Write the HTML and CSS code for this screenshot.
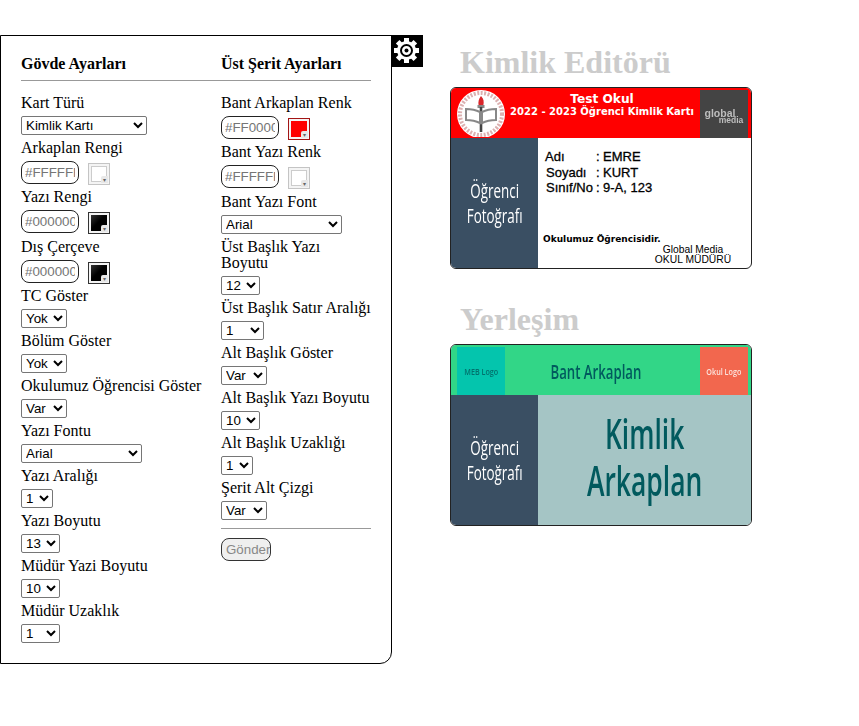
FILE: index.html
```html
<!DOCTYPE html>
<html lang="tr">
  <head>
    <meta charset="UTF-8" />
    <meta name="viewport" content="width=device-width, initial-scale=1.0" />
    <title>Kimlik Editörü</title>
    <link rel="stylesheet" href="styles.css">
  </head>
  <body>
    <div class="page">
      <form class="panel">
        <a class="gear">
          <svg width="32" height="32" viewBox="0 0 32 32">
            <g transform="translate(-.5 -.5)">
              <g fill="#fff">
                <circle cx="16" cy="16" r="9.500" />
                <rect x="13.500" y="3.500" width="5" height="25" />
                <rect x="13.500" y="3.500" width="5" height="25" transform="rotate(45 16 16)" />
                <rect x="13.500" y="3.500" width="5" height="25" transform="rotate(90 16 16)" />
                <rect x="13.500" y="3.500" width="5" height="25" transform="rotate(135 16 16)" />
              </g>
              <circle cx="16" cy="16" r="5.500" fill="none" stroke="#000" stroke-width="2" />
              <circle cx="16" cy="16" r="2" fill="#000" />
            </g>
          </svg>
        </a>
        <div class="col col-left">
          <h4>Gövde Ayarları</h4>
          <hr />
          <label>Kart Türü</label>
          <div class="row"><select class="w126"><option>Kimlik Kartı</option></select></div>
          <label>Arkaplan Rengi</label>
          <div class="row color"><input placeholder="#FFFFFF" /><span class="swatch white"></span></div>
          <label>Yazı Rengi</label>
          <div class="row color"><input placeholder="#000000" /><span class="swatch black"></span></div>
          <label>Dış Çerçeve</label>
          <div class="row color"><input placeholder="#000000" /><span class="swatch black"></span></div>
          <label>TC Göster</label>
          <div class="row"><select class="w46"><option>Yok</option></select></div>
          <label>Bölüm Göster</label>
          <div class="row"><select class="w46"><option>Yok</option></select></div>
          <label>Okulumuz Öğrencisi Göster</label>
          <div class="row"><select class="w46"><option>Var</option></select></div>
          <label>Yazı Fontu</label>
          <div class="row"><select class="w121"><option>Arial</option></select></div>
          <label>Yazı Aralığı</label>
          <div class="row"><select class="w32"><option>1</option></select></div>
          <label>Yazı Boyutu</label>
          <div class="row"><select class="w39"><option>13</option></select></div>
          <label>Müdür Yazi Boyutu</label>
          <div class="row"><select class="w39"><option>10</option></select></div>
          <label>Müdür Uzaklık</label>
          <div class="row"><select class="w39"><option>1</option></select></div>
        </div>
        <div class="col col-right">
          <h4>Üst Şerit Ayarları</h4>
          <hr />
          <label>Bant Arkaplan Renk</label>
          <div class="row color"><input placeholder="#FF0000" /><span class="swatch red"></span></div>
          <label>Bant Yazı Renk</label>
          <div class="row color"><input placeholder="#FFFFFF" /><span class="swatch white"></span></div>
          <label>Bant Yazı Font</label>
          <div class="row"><select class="w121"><option>Arial</option></select></div>
          <label>Üst Başlık Yazı Boyutu</label>
          <div class="row"><select class="w39"><option>12</option></select></div>
          <label>Üst Başlık Satır Aralığı</label>
          <div class="row"><select class="w43"><option>1</option></select></div>
          <label>Alt Başlık Göster</label>
          <div class="row"><select class="w46"><option>Var</option></select></div>
          <label>Alt Başlık Yazı Boyutu</label>
          <div class="row"><select class="w39"><option>10</option></select></div>
          <label>Alt Başlık Uzaklığı</label>
          <div class="row"><select class="w32"><option>1</option></select></div>
          <label>Şerit Alt Çizgi</label>
          <div class="row"><select class="w46"><option>Var</option></select></div>
          <hr class="end" />
          <button type="button" disabled>Gönder</button>
        </div>
      </form>

      <div class="preview">
        <h1>Kimlik Editörü</h1>
        <div class="card">
          <div class="band band-red">
            <div class="logo-box">
              <svg class="meb" width="48" height="48" viewBox="0 0 48 48">
                <circle cx="24" cy="25" r="24" fill="#fff" />
                <circle cx="24" cy="25" r="21" fill="none" stroke="#dcb0b0" stroke-width="4" stroke-dasharray="2 1.500" />
                <circle cx="24" cy="25" r="18" fill="#fff" />
                <path d="M24 7c3 3 3 6 2.400 9h-4.800c-.6-3 0-6 2.400-9z" fill="#d9262a" />
                <rect x="20.500" y="16" width="7" height="3" fill="#888" />
                <rect x="22.700" y="18" width="2.600" height="25" fill="#444" />
                <path d="M9 20v11c5 0 10 1 14 3v-11c-4-2-9-3-14-3zM39 20v11c-5 0-10 1-14 3v-11c4-2 9-3 14-3z" fill="none" stroke="#888" stroke-width="2" />
              </svg>
            </div>
            <div class="band-title">
              <b class="school">Test Okul</b>
              <b class="year">2022 - 2023 Öğrenci Kimlik Kartı</b>
            </div>
            <div class="logo-box global">
              <span class="g-top">global</span>
              <span class="g-bottom">media</span>
            </div>
          </div>
          <div class="card-body">
            <div class="photo"><span>Öğrenci<br />Fotoğrafı</span></div>
            <div class="info">
              <dl>
                <dt>Adı</dt><dd>:</dd><dd>EMRE</dd>
                <dt class="nudge">Soyadı</dt><dd>:</dd><dd>KURT</dd>
                <dt class="nudge">Sınıf/No</dt><dd>:</dd><dd>9-A, 123</dd>
              </dl>
              <div class="proud">Okulumuz Öğrencisidir.</div>
              <div class="sign">Global Media<br />OKUL MÜDÜRÜ</div>
            </div>
          </div>
        </div>

        <h1 class="second">Yerleşim</h1>
        <div class="card">
          <div class="band band-green">
            <div class="logo-box teal"><span class="cond small dark">MEB Logo</span></div>
            <div class="band-title"><span class="cond band-name">Bant Arkaplan</span></div>
            <div class="logo-box orange"><span class="cond small">Okul Logo</span></div>
          </div>
          <div class="card-body">
            <div class="photo"><span>Öğrenci<br />Fotoğrafı</span></div>
            <div class="bg-label"><span class="cond">Kimlik<br />Arkaplan</span></div>
          </div>
        </div>
      </div>
    </div>
  </body>
</html>
```

FILE: styles.css
```css
* {
  box-sizing: border-box;
}
body {
  margin: 0;
  background: #fff;
  color: #000;
  font-family: "Liberation Serif", serif;
  font-size: 16px;
}
.page {
  display: flex;
  align-items: flex-start;
  height: 726px;
}

/* settings panel */
.panel {
  position: relative;
  display: flex;
  width: 392px;
  height: 629px;
  margin-top: 35px;
  padding: 19px 0 0 20px;
  border: 1px solid #000;
  border-radius: 0 0 12px 0;
}
.gear {
  position: absolute;
  top: -1px;
  left: 100%;
  width: 32px;
  height: 32px;
  background: #000;
}
.gear svg {
  display: block;
}
.col-left {
  width: 200px;
}
.col-right {
  width: 150px;
}
h4 {
  margin: 0;
  font-size: 16px;
  line-height: 18px;
}
hr {
  height: 1px;
  margin: 7px 0 13px;
  border: 0;
  background: #999;
}
hr.end {
  margin: 4px 0 9px;
}
label {
  display: block;
  line-height: 16px;
  padding: 1px 0;
}
.row {
  height: 27px;
  padding-top: 4px;
}
.row.color {
  display: flex;
  align-items: flex-start;
  gap: 9px;
  height: 31.4px;
}
select {
  display: block;
  height: 19px;
  padding: 0;
  border: 1px solid #767676;
  border-radius: 2px;
  background: #fff;
  font-family: "Liberation Sans", sans-serif;
  font-size: 13.333px;
}
.w32 { width: 32px; }
.w39 { width: 39px; }
.w43 { width: 43px; }
.w46 { width: 46px; }
.w121 { width: 121px; }
.w126 { width: 126px; }
input {
  width: 58px;
  height: 23px;
  padding: 1px 3px;
  border: 1px solid #222;
  border-radius: 8px;
  font-family: "Liberation Sans", sans-serif;
  font-size: 13.333px;
}
input::placeholder {
  color: #757575;
}

/* colour picker buttons */
.swatch {
  position: relative;
  width: 22px;
  height: 22px;
  margin-top: 2px;
  border: 1px solid #333;
  background: #f4f4f4;
}
.swatch::before {
  content: "";
  position: absolute;
  inset: 2px;
}
.swatch::after {
  content: "▾";
  position: absolute;
  right: 1px;
  bottom: 1px;
  width: 7px;
  height: 7px;
  border-radius: 2px 0 0 0;
  background: #e8e8e8;
  color: #666;
  font-family: "DejaVu Sans", sans-serif;
  font-size: 6px;
  line-height: 7px;
  text-align: center;
}
.swatch.white {
  border-color: #c4c4c4;
}
.swatch.white::before {
  background: #fff;
  border: 1px solid #ccc;
}
.swatch.black::before {
  background: linear-gradient(135deg, #333, #000 45%);
}
.swatch.red {
  border-color: #a31515;
}
.swatch.red::before {
  background: #f00;
}
button {
  display: block;
  width: 50px;
  height: 23px;
  padding: 0 0 0 4px;
  border: 1px solid #333;
  border-radius: 8px;
  background: #efefef;
  color: #888;
  font-family: "Liberation Sans", sans-serif;
  font-size: 13.333px;
  overflow: hidden;
  text-align: left;
  white-space: nowrap;
}

/* right side */
.preview {
  width: 302px;
  margin-left: 58px;
  padding-top: 45px;
}
h1 {
  margin: 0 0 8px 10px;
  color: #ccc;
  font-size: 32px;
  line-height: 34px;
}
h1.second {
  margin: 33px 0 8px 10px;
}
.card {
  display: flex;
  flex-direction: column;
  overflow: hidden;
  width: 302px;
  height: 182px;
  border: 1px solid #222;
  border-radius: 6px;
}
.band {
  display: flex;
  flex: none;
  height: 50px;
  padding: 0 3px 0 6px;
}
.band-red {
  background: #f00;
}
.band-green {
  background: #32d687;
  padding-top: 2px;
}
.logo-box {
  display: flex;
  align-items: center;
  justify-content: center;
  flex: none;
  width: 48px;
}
.meb {
  filter: blur(.4px);
}
.band-title {
  display: flex;
  flex: 1;
  flex-direction: column;
  align-items: center;
  justify-content: center;
  color: #fff;
}
.band-red .band-title {
  justify-content: flex-start;
  padding-top: 4px;
  margin-left: -1px;
}
.school {
  font-family: "DejaVu Sans", sans-serif;
  font-size: 12.2px;
  line-height: 14px;
}
.year {
  font-family: "DejaVu Sans", sans-serif;
  font-size: 10px;
  line-height: 11px;
  white-space: nowrap;
}
.global {
  flex-direction: column;
  align-self: flex-end;
  height: 48px;
  padding-top: 4px;
  background: #444;
  color: #bdbdbd;
  font-family: "Liberation Sans", sans-serif;
  font-weight: bold;
}
.g-top {
  margin-right: 8px;
  font-size: 10.5px;
  line-height: 8px;
  filter: blur(.6px);
}
.g-bottom {
  margin-left: 14px;
  font-size: 8.5px;
  line-height: 7px;
  filter: blur(.6px);
}
.teal {
  background: #04c5ad;
}
.orange {
  background: #f2674e;
}
.card-body {
  display: flex;
  flex: 1;
}
.photo {
  display: flex;
  flex: none;
  align-items: center;
  justify-content: center;
  width: 87px;
  background: #3a4f63;
  color: #fff;
  font-family: "Open Sans", sans-serif;
  font-size: 20px;
  line-height: 25px;
  text-align: center;
}
.photo span {
  transform: scaleX(.67);
  white-space: nowrap;
}
.info {
  flex: 1;
  padding: 11px 0 0 5px;
  font-family: "Liberation Sans", sans-serif;
  color: #000;
}
dl {
  display: grid;
  grid-template-columns: 51px 7px auto;
  grid-auto-rows: 15.5px;
  margin: 0 0 0 2px;
  font-size: 13px;
  line-height: 16px;
  -webkit-text-stroke: .3px #000;
}
dd {
  margin: 0;
}
dt.nudge {
  margin-left: 1px;
}
.proud {
  margin-top: 37px;
  font-family: "DejaVu Sans", sans-serif;
  font-size: 9px;
  font-weight: bold;
  line-height: 12px;
  white-space: nowrap;
}
.sign {
  margin-top: 0;
  padding-left: 92px;
  font-size: 10.3px;
  line-height: 10px;
  text-align: center;
  white-space: nowrap;
}

/* futura look-alike text on the layout card */
.cond {
  display: inline-block;
  font-family: "Open Sans", sans-serif;
  color: #015a5e;
  text-align: center;
  white-space: nowrap;
}
.small {
  transform: scaleX(.8);
  color: #fbe3dd;
  font-size: 9px;
  font-weight: 600;
}
.small.dark {
  color: #02716d;
}
.band-name {
  margin-right: 14px;
  transform: scaleX(.66);
  font-size: 20px;
  font-weight: 600;
}
.bg-label {
  display: flex;
  flex: 1;
  align-items: center;
  justify-content: center;
  padding-bottom: 9px;
  background: #a5c5c5;
}
.bg-label .cond {
  transform: scaleX(.63);
  font-size: 42px;
  font-weight: 600;
  line-height: 47px;
}
```
